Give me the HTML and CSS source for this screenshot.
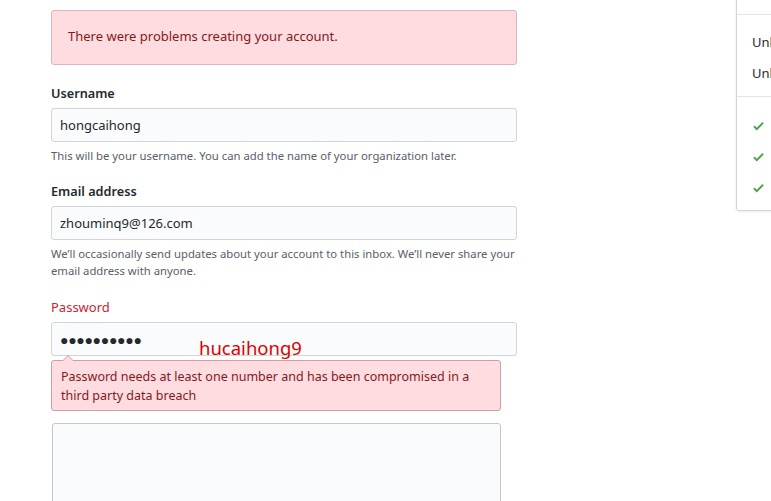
FILE: index.html
```html
<!DOCTYPE html>
<html lang="en">
<head>
<meta charset="utf-8">
<title>Join</title>
<link rel="stylesheet" href="styles.css">
</head>
<body>
<div class="page">
  <main class="form">
    <div class="flash">There were problems creating your account.</div>

    <div class="field">
      <label class="label">Username</label>
      <div class="input">hongcaihong</div>
      <p class="note">This will be your username. You can add the name of your organization later.</p>
    </div>

    <div class="field">
      <label class="label">Email address</label>
      <div class="input">zhouminq9@126.com</div>
      <p class="note">We’ll occasionally send updates about your account to this inbox. We’ll never share your email address with anyone.</p>
    </div>

    <div class="field field-error">
      <label class="label">Password</label>
      <div class="input input-pass">●●●●●●●●●●</div>
      <span class="annot">hucaihong9</span>
      <div class="error">Password needs at least one number and has been compromised in a third party data breach</div>
    </div>

    <div class="box"></div>
  </main>

  <aside class="side">
    <div class="side-top"></div>
    <ul class="side-list">
      <li>Unlimited collaborators</li>
      <li>Unlimited public repositories</li>
    </ul>
    <ul class="side-checks">
      <li><svg class="check" viewBox="0 0 12 16" width="11" height="14"><path fill="currentColor" d="M12 5l-8 8-4-4 1.5-1.5L4 10l6.5-6.5L12 5z"/></svg>Great communication</li>
      <li><svg class="check" viewBox="0 0 12 16" width="11" height="14"><path fill="currentColor" d="M12 5l-8 8-4-4 1.5-1.5L4 10l6.5-6.5L12 5z"/></svg>Frictionless development</li>
      <li><svg class="check" viewBox="0 0 12 16" width="11" height="14"><path fill="currentColor" d="M12 5l-8 8-4-4 1.5-1.5L4 10l6.5-6.5L12 5z"/></svg>Open source community</li>
    </ul>
  </aside>
</div>
</body>
</html>
```

FILE: styles.css
```css
* { box-sizing: border-box; }
html, body { margin: 0; padding: 0; background: #fff; overflow: hidden; }
body {
  font-family: "Noto Sans", "Open Sans", sans-serif;
  color: #24292e;
  font-size: 13px;
  width: 771px;
  height: 501px;
}
.page {
  display: flex;
  align-items: flex-start;
  padding-left: 51px;
}
.form {
  width: 466px;
  flex: none;
  padding-top: 10px;
}
.flash {
  height: 55px;
  display: flex;
  align-items: center;
  padding: 0 16px 3px;
  background: #ffdce0;
  border: 1px solid #e0b4b9;
  border-radius: 3px;
  color: #86181d;
  font-size: 13px;
}
.field {
  position: relative;
  margin-top: 18px;
}
.field + .field { margin-top: 17px; }
.field-error { margin-top: 18px !important; }
.label {
  display: block;
  font-weight: 600;
  font-size: 12.7px;
  line-height: 20px;
  margin-bottom: 5px;
}
.field-error .label { color: #cb2431; font-weight: 400; font-size: 13px; }
.input {
  height: 34px;
  padding: 0 8px;
  display: flex;
  align-items: center;
  background: #fafbfc;
  border: 1px solid #d1d5da;
  border-radius: 3px;
  font-size: 13px;
  color: #24292e;
}
.input-pass {
  font-size: 14px;
  letter-spacing: -0.3px;
  color: #24292e;
}
.note {
  margin: 5px 0 0;
  font-size: 11.3px;
  line-height: 17px;
  color: #586069;
}
.annot {
  position: absolute;
  left: 148px;
  top: 39px;
  font-size: 18.5px;
  line-height: 24px;
  color: #e00000;
  z-index: 2;
}
.error {
  position: relative;
  width: 450px;
  margin-top: 4px;
  padding: 6px 9px 5px;
  background: #ffdce0;
  border: 1px solid #cea0a5;
  border-radius: 3px;
  color: #86181d;
  font-size: 12.5px;
  line-height: 19px;
}
.error::before,
.error::after {
  content: "";
  position: absolute;
  left: 10px;
  border: 6px solid transparent;
}
.error::before { top: -12px; border-bottom-color: #cea0a5; }
.error::after { top: -11px; border-bottom-color: #ffdce0; }
.box {
  margin: 12px 0 0 1px;
  width: 449px;
  height: 100px;
  background: #fafbfc;
  border: 1px solid #c3c8cf;
  border-radius: 3px;
}
.side {
  margin-left: 219px;
  flex: none;
  width: 300px;
  margin-top: -20px;
  border: 1px solid #d1d5da;
  border-radius: 3px;
  box-shadow: 0 1px 3px rgba(0,0,0,0.08);
  font-family: "Noto Sans", sans-serif;
  padding-bottom: 0;
}
.side-top {
  height: 34px;
  border-bottom: 1px solid #e1e4e8;
}
.side-list, .side-checks {
  list-style: none;
  margin: 0;
  padding: 0 15px;
}
.side-list {
  padding-top: 19px;
  padding-bottom: 15px;
  border-bottom: 1px solid #e1e4e8;
}
.side-list li {
  line-height: 16px;
  font-size: 13px;
  color: #24292e;
  margin-bottom: 15px;
}
.side-list li:last-child { margin-bottom: 0; }
.side-checks { padding-top: 13px; padding-bottom: 7px; }
.side-checks li {
  display: flex;
  align-items: center;
  height: 31px;
  font-size: 13px;
}
.check {
  color: #4fa34f;
  margin: 0 10px 0 1px;
  flex: none;
}
```
